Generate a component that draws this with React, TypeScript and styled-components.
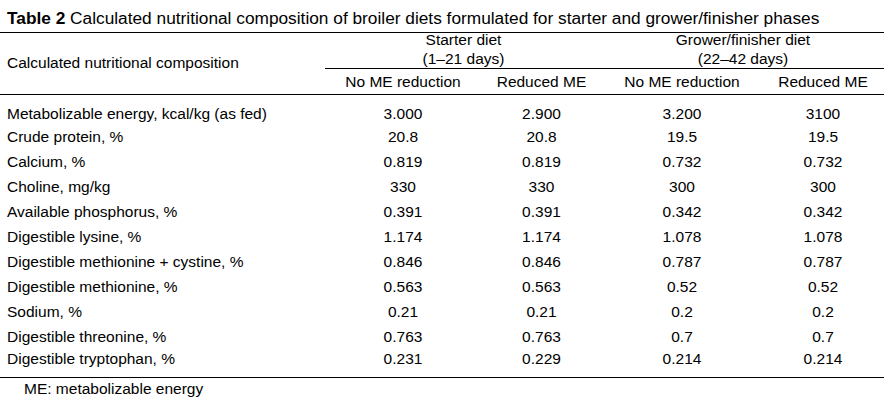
import styled, { createGlobalStyle } from "styled-components";

const GlobalStyle = createGlobalStyle`
  html, body {
    margin: 0;
    padding: 0;
    background: #fff;
  }
  body {
    font-family: "Liberation Sans", Arial, sans-serif;
    font-size: 15.5px;
    color: #000;
  }
`;

const COLS = "325px 156px 121px 160px 122px";

const Page = styled.div`
  width: 895px;
  height: 409px;
  overflow: hidden;
`;

const Title = styled.div`
  padding: 9px 0 5px 7px;
  font-size: 17.3px;
  line-height: 18px;
  white-space: nowrap;

  b {
    font-weight: bold;
  }
`;

const Table = styled.div`
  width: 884px;
  border-top: 1px solid #000;
  border-bottom: 1px solid #000;
`;

const Head = styled.div`
  display: grid;
  grid-template-columns: ${COLS};
  grid-template-rows: 36px 25px;
  border-bottom: 1px solid #000;
`;

const HeadLabel = styled.div`
  grid-column: 1;
  grid-row: 1 / span 2;
  display: flex;
  align-items: center;
  padding-left: 7px;
  padding-bottom: 1px;
`;

const GroupCell = styled.div<{ $col: number }>`
  grid-column: ${(p) => p.$col} / span 2;
  grid-row: 1;
  display: flex;
  flex-direction: column;
  justify-content: flex-end;
  align-items: center;
  line-height: 19px;
  border-bottom: 1px solid #000;
`;

const SubHead = styled.div`
  grid-row: 2;
  display: flex;
  align-items: center;
  justify-content: center;
  white-space: nowrap;
`;

const Body = styled.div`
  padding: 8px 0;
`;

const Row = styled.div<{ $h: number }>`
  display: grid;
  grid-template-columns: ${COLS};
  height: ${(p) => p.$h}px;
  align-items: center;
`;

const Label = styled.div`
  padding-left: 7px;
  white-space: nowrap;
`;

const Value = styled.div`
  text-align: center;
`;

const Footnote = styled.div`
  padding: 2px 0 0 24px;
  line-height: 17px;
`;

const rows: { label: string; h: number; values: string[] }[] = [
  { label: "Metabolizable energy, kcal/kg (as fed)", h: 22, values: ["3.000", "2.900", "3.200", "3100"] },
  { label: "Crude protein, %", h: 24, values: ["20.8", "20.8", "19.5", "19.5"] },
  { label: "Calcium, %", h: 26, values: ["0.819", "0.819", "0.732", "0.732"] },
  { label: "Choline, mg/kg", h: 24, values: ["330", "330", "300", "300"] },
  { label: "Available phosphorus, %", h: 25, values: ["0.391", "0.391", "0.342", "0.342"] },
  { label: "Digestible lysine, %", h: 26, values: ["1.174", "1.174", "1.078", "1.078"] },
  { label: "Digestible methionine + cystine, %", h: 24, values: ["0.846", "0.846", "0.787", "0.787"] },
  { label: "Digestible methionine, %", h: 25, values: ["0.563", "0.563", "0.52", "0.52"] },
  { label: "Sodium, %", h: 26, values: ["0.21", "0.21", "0.2", "0.2"] },
  { label: "Digestible threonine, %", h: 23, values: ["0.763", "0.763", "0.7", "0.7"] },
  { label: "Digestible tryptophan, %", h: 21, values: ["0.231", "0.229", "0.214", "0.214"] },
];

export default function App() {
  return (
    <Page>
      <GlobalStyle />
      <Title>
        <b>Table 2</b> Calculated nutritional composition of broiler diets formulated for starter and grower/finisher phases
      </Title>
      <Table>
        <Head>
          <HeadLabel>Calculated nutritional composition</HeadLabel>
          <GroupCell $col={2}>
            <span>Starter diet</span>
            <span>(1–21 days)</span>
          </GroupCell>
          <GroupCell $col={4}>
            <span>Grower/finisher diet</span>
            <span>(22–42 days)</span>
          </GroupCell>
          <SubHead>No ME reduction</SubHead>
          <SubHead>Reduced ME</SubHead>
          <SubHead>No ME reduction</SubHead>
          <SubHead>Reduced ME</SubHead>
        </Head>
        <Body>
          {rows.map((r) => (
            <Row key={r.label} $h={r.h}>
              <Label>{r.label}</Label>
              {r.values.map((v, i) => (
                <Value key={i}>{v}</Value>
              ))}
            </Row>
          ))}
        </Body>
      </Table>
      <Footnote>ME: metabolizable energy</Footnote>
    </Page>
  );
}
